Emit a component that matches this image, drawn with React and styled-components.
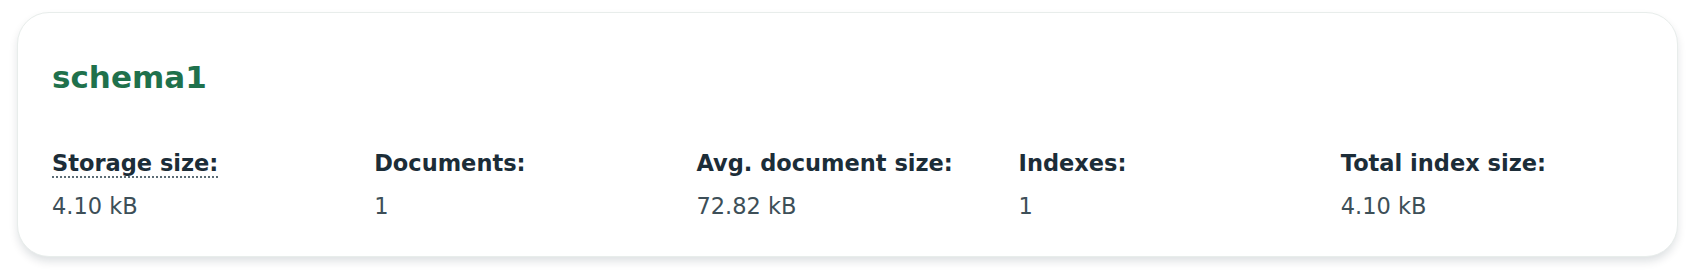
import React from "react"
import styled, {createGlobalStyle} from "styled-components"

const GlobalStyle = createGlobalStyle`
  html, body {
    margin: 0;
    padding: 0;
    background: #ffffff;
  }

  body {
    font-family: "DejaVu Sans", "Open Sans", "Liberation Sans", sans-serif;
    -webkit-font-smoothing: antialiased;
  }
`

const Page = styled.div`
  padding: 12px 14px 17px 17px;
`

const Card = styled.section`
  box-sizing: border-box;
  height: 245px;
  padding: 44px 34px 0 34px;
  background: #ffffff;
  border: 1px solid #e8edeb;
  border-radius: 32px;
  box-shadow: 0 5px 10px -1px rgba(0, 30, 43, 0.14);
`

const Title = styled.h2`
  margin: 0;
  font-size: 31px;
  line-height: 40px;
  font-weight: 700;
  color: #1f714c;
`

const Stats = styled.dl`
  display: grid;
  grid-template-columns: repeat(5, 1fr);
  column-gap: 20px;
  margin: 51px 0 0 0;
`

const Stat = styled.div`
  display: flex;
  flex-direction: column;
  align-items: flex-start;
  gap: 13px;
`

const Label = styled.dt`
  font-size: 22.5px;
  line-height: 30px;
  font-weight: 700;
  color: #1c2d38;

  span {
    border-bottom: ${props => props.$hint ? "2px dotted #5c6c75" : "none"};
  }
`

const Value = styled.dd`
  margin: 0;
  font-size: 22.5px;
  line-height: 30px;
  font-weight: 400;
  color: #3d4f58;
`

const stats = [
  {label: "Storage size:", value: "4.10 kB", hint: true},
  {label: "Documents:", value: "1"},
  {label: "Avg. document size:", value: "72.82 kB"},
  {label: "Indexes:", value: "1"},
  {label: "Total index size:", value: "4.10 kB"},
]

export default function App() {
  return (
    <>
      <GlobalStyle />
      <Page>
        <Card>
          <Title>schema1</Title>
          <Stats>
            {stats.map(stat => (
              <Stat key={stat.label}>
                <Label $hint={stat.hint}><span>{stat.label}</span></Label>
                <Value>{stat.value}</Value>
              </Stat>
            ))}
          </Stats>
        </Card>
      </Page>
    </>
  )
}
